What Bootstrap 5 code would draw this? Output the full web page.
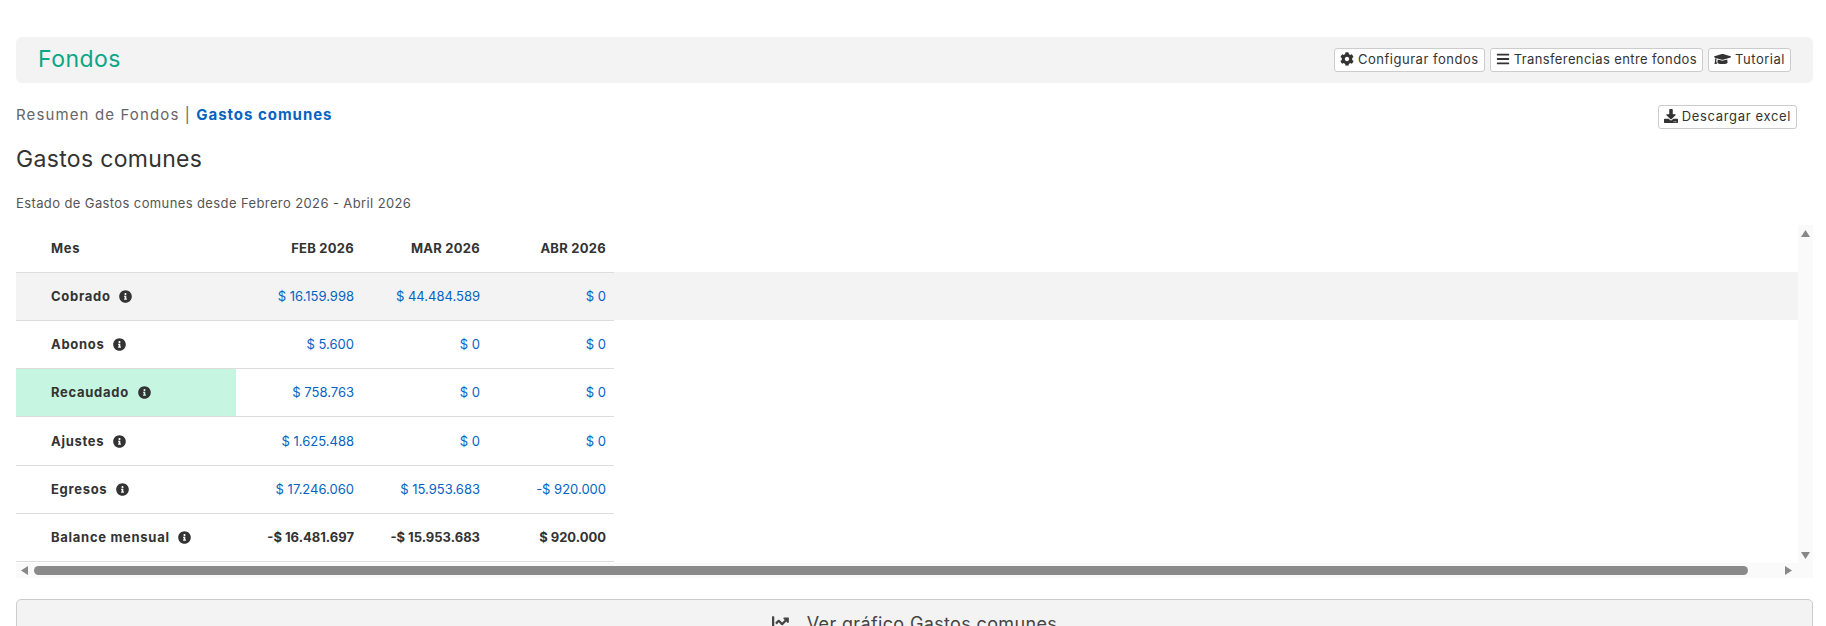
<!DOCTYPE html>
<html lang="es"><head><meta charset="utf-8"><title>Fondos</title>
<link href="https://cdn.jsdelivr.net/npm/bootstrap@5.3.0/dist/css/bootstrap.min.css" rel="stylesheet">
<style>
html,body{height:626px;overflow:hidden}
body{font-family:Inter,"Liberation Sans",sans-serif;color:#333;background:#fff;padding:37px 13px 0 16px}
.ic{fill:currentColor;width:1em;height:1em;vertical-align:-.125em}
.topbar{height:46px;background:#f3f3f3;border-radius:6px;padding:0 22px 0 22px}
.topbar-title{font-size:23px;color:#0aa686;font-weight:400;margin:0;letter-spacing:.02em}
.btn-plain{font-size:13px;line-height:18px;padding:1px 5px 3px;height:24px;background:#fff;border:1px solid #ccc;border-radius:3px;color:#333;white-space:nowrap;letter-spacing:.04em}
.btn-plain .ic{width:14px;height:14px;vertical-align:-2px}
.btn-plain .ic-wide{width:17px}
.btn-gap{gap:5px}
.btn-tight{letter-spacing:.03em}
.crumbs{margin-top:21px;height:25px;padding-right:16px}
.crumbs .btn-plain{margin-top:1px;letter-spacing:.05em}
.crumb-text{font-size:15px;color:#666;letter-spacing:.075em}
.crumb-text a{color:#0563c1;font-weight:700;text-decoration:none;letter-spacing:.065em}
.sec-title{font-size:23px;font-weight:400;line-height:30px;margin:15px 0 0;color:#333;letter-spacing:.014em}
.sec-sub{font-size:13px;color:#555;line-height:18px;margin:20px 0 0;letter-spacing:.03em}
.scrollbox{height:353px;margin-top:13px}
.scroll-main{height:338px}
.scroll-view{overflow:hidden}
.vbar{width:15px;background:#fafafa;padding:5px 0 4px}
.hbar{height:15px;background:#fafafa;padding-left:5px;padding-right:21px}
.hthumb{height:9px;width:1714px;margin-left:6px;background:#8a8a8a;border-radius:5px}
.arrow{fill:#888;display:block}
.grid-t{width:1823px;table-layout:fixed;border-collapse:collapse;font-size:13px}
.grid-t th,.grid-t td{height:48.3px;padding:1px 8px 0 0;text-align:right;border-bottom:1px solid #ddd;vertical-align:middle;color:#0563c1;font-weight:400}
.grid-t thead th{height:47px;padding-top:0;color:#333;font-weight:700;letter-spacing:.02em}
.grid-t .lbl{text-align:left;padding-left:35px;color:#333;font-weight:700;letter-spacing:.055em}
.grid-t .fill{border:0}
.grid-t .tot{color:#333;font-weight:700}
.grid-t .i-sm{font-size:13px;margin-left:5px;vertical-align:-2px}
.r-grey td,.r-grey th{background:#f3f3f3}
.grid-t .r-mint{background:#c6f6e1}
.chart-btn{width:100%;margin-top:21px;height:60px;background:#f3f3f3;border:1px solid #ccc;border-radius:5px;color:#444;font-size:18px;letter-spacing:.02em;display:block;padding:0 0 12px}
.chart-btn .ic{margin-right:6px}
</style></head><body>
<svg width="0" height="0" class="d-block position-absolute">
<symbol id="i-info" viewBox="0 0 512 512"><path d="M256 8C119.043 8 8 119.083 8 256c0 136.997 111.043 248 248 248s248-111.003 248-248C504 119.083 392.957 8 256 8zm0 110c23.196 0 42 18.804 42 42s-18.804 42-42 42-42-18.804-42-42 18.804-42 42-42zm56 254c0 6.627-5.373 12-12 12h-88c-6.627 0-12-5.373-12-12v-24c0-6.627 5.373-12 12-12h12v-64h-12c-6.627 0-12-5.373-12-12v-24c0-6.627 5.373-12 12-12h64c6.627 0 12 5.373 12 12v100h12c6.627 0 12 5.373 12 12v24z"/></symbol>
<symbol id="i-cog" viewBox="0 0 512 512"><path d="M487.4 315.7l-42.6-24.6c4.3-23.2 4.3-47 0-70.2l42.6-24.6c4.9-2.8 7.1-8.6 5.5-14-11.1-35.6-30-67.8-54.7-94.6-3.8-4.1-10-5.1-14.8-2.3L380.8 110c-17.9-15.4-38.5-27.3-60.8-35.1V25.8c0-5.6-3.9-10.5-9.4-11.7-36.7-8.2-74.3-7.8-109.2 0-5.5 1.2-9.4 6.1-9.4 11.7V75c-22.2 7.9-42.8 19.8-60.8 35.1L88.7 85.5c-4.9-2.8-11-1.9-14.8 2.3-24.7 26.7-43.6 58.9-54.7 94.6-1.7 5.4.6 11.2 5.5 14L67.3 221c-4.3 23.2-4.3 47 0 70.2l-42.6 24.6c-4.9 2.8-7.1 8.6-5.5 14 11.1 35.6 30 67.8 54.7 94.6 3.8 4.1 10 5.1 14.8 2.3l42.6-24.6c17.9 15.4 38.5 27.3 60.8 35.1v49.2c0 5.6 3.9 10.5 9.4 11.7 36.7 8.2 74.3 7.8 109.2 0 5.5-1.2 9.4-6.1 9.4-11.7v-49.2c22.2-7.9 42.8-19.8 60.8-35.1l42.6 24.6c4.9 2.8 11 1.9 14.8-2.3 24.7-26.7 43.6-58.9 54.7-94.6 1.5-5.5-.7-11.3-5.6-14.1zM256 336c-44.1 0-80-35.9-80-80s35.9-80 80-80 80 35.9 80 80-35.9 80-80 80z"/></symbol>
<symbol id="i-bars" viewBox="0 0 448 512"><path d="M16 132h416c8.837 0 16-7.163 16-16V76c0-8.837-7.163-16-16-16H16C7.163 60 0 67.163 0 76v40c0 8.837 7.163 16 16 16zm0 160h416c8.837 0 16-7.163 16-16v-40c0-8.837-7.163-16-16-16H16c-8.837 0-16 7.163-16 16v40c0 8.837 7.163 16 16 16zm0 160h416c8.837 0 16-7.163 16-16v-40c0-8.837-7.163-16-16-16H16c-8.837 0-16 7.163-16 16v40c0 8.837 7.163 16 16 16z"/></symbol>
<symbol id="i-cap" viewBox="0 0 640 512"><path d="M622.34 153.2L343.4 67.5c-15.2-4.67-31.6-4.67-46.79 0L17.66 153.2c-23.54 7.23-23.54 38.36 0 45.59l48.63 14.94c-10.67 13.19-17.23 29.28-17.88 46.9C38.78 266.15 32 276.11 32 288c0 10.78 5.68 19.85 13.86 25.65L20.33 428.53C18.11 438.52 25.71 448 35.94 448h56.11c10.24 0 17.84-9.48 15.62-19.47L82.14 313.65C90.32 307.85 96 298.78 96 288c0-11.57-6.47-21.25-15.66-26.87.76-15.02 8.44-28.3 20.69-36.72L296.6 284.5c9.06 2.78 26.44 6.25 46.79 0l278.95-85.7c23.55-7.24 23.55-38.36 0-45.6zM352.79 315.09c-28.53 8.76-52.84 3.92-65.59 0l-145.02-44.55L128 384c0 35.35 85.96 64 192 64s192-28.65 192-64l-14.18-113.47-145.03 44.56z"/></symbol>
<symbol id="i-down" viewBox="0 0 512 512"><path d="M216 0h80c13.3 0 24 10.7 24 24v168h87.7c17.8 0 26.7 21.5 14.1 34.1L269.7 378.3c-7.5 7.5-19.8 7.5-27.3 0L90.1 226.1c-12.6-12.6-3.7-34.1 14.1-34.1H192V24c0-13.3 10.7-24 24-24zm296 376v112c0 13.3-10.7 24-24 24H24c-13.3 0-24-10.7-24-24V376c0-13.3 10.7-24 24-24h146.7l49 49c20.1 20.1 52.5 20.1 72.6 0l49-49H488c13.3 0 24 10.7 24 24zm-124 88c0-11-9-20-20-20s-20 9-20 20 9 20 20 20 20-9 20-20zm64 0c0-11-9-20-20-20s-20 9-20 20 9 20 20 20 20-9 20-20z"/></symbol>
<symbol id="i-chart" viewBox="0 0 512 512"><path d="M496 384H64V80c0-8.84-7.16-16-16-16H16C7.16 64 0 71.16 0 80v336c0 17.67 14.33 32 32 32h464c8.84 0 16-7.16 16-16v-32c0-8.84-7.16-16-16-16zM464 96H345.94c-21.38 0-32.09 25.85-16.97 40.97l32.4 32.4L288 242.75l-73.37-73.37c-12.5-12.5-32.76-12.5-45.25 0l-68.69 68.69c-6.25 6.25-6.25 16.38 0 22.63l22.62 22.62c6.25 6.25 16.38 6.25 22.63 0L192 237.25l73.37 73.37c12.5 12.5 32.76 12.5 45.25 0l96-96 32.4 32.4c15.12 15.12 40.97 4.41 40.97-16.97V112c0-8.84-7.16-16-16-16z"/></symbol>
</svg>

<header class="topbar d-flex align-items-center justify-content-between">
  <h1 class="topbar-title">Fondos</h1>
  <div class="d-flex btn-gap">
    <button class="btn-plain"><svg class="ic"><use href="#i-cog"/></svg> Configurar fondos</button>
    <button class="btn-plain btn-tight"><svg class="ic"><use href="#i-bars"/></svg> Transferencias entre fondos</button>
    <button class="btn-plain"><svg class="ic ic-wide"><use href="#i-cap"/></svg> Tutorial</button>
  </div>
</header>

<div class="crumbs d-flex justify-content-between align-items-start">
  <div class="crumb-text">Resumen de Fondos | <a href="#">Gastos comunes</a></div>
  <button class="btn-plain"><svg class="ic"><use href="#i-down"/></svg> Descargar excel</button>
</div>
<h2 class="sec-title">Gastos comunes</h2>
<p class="sec-sub">Estado de Gastos comunes desde Febrero 2026 - Abril 2026</p>

<div class="scrollbox">
<div class="scroll-main d-flex">
<div class="scroll-view flex-grow-1">
<table class="grid-t">
<colgroup><col style="width:220px"><col style="width:126px"><col style="width:126px"><col style="width:126px"><col></colgroup>
<thead><tr><th class="lbl">Mes</th><th>FEB 2026</th><th>MAR 2026</th><th>ABR 2026</th><th class="fill"></th></tr></thead>
<tbody>
<tr class="r-grey"><th class="lbl">Cobrado <svg class="ic i-sm"><use href="#i-info"/></svg></th><td>$ 16.159.998</td><td>$ 44.484.589</td><td>$ 0</td><td class="fill"></td></tr>
<tr><th class="lbl">Abonos <svg class="ic i-sm"><use href="#i-info"/></svg></th><td>$ 5.600</td><td>$ 0</td><td>$ 0</td><td class="fill"></td></tr>
<tr><th class="lbl r-mint">Recaudado <svg class="ic i-sm"><use href="#i-info"/></svg></th><td>$ 758.763</td><td>$ 0</td><td>$ 0</td><td class="fill"></td></tr>
<tr><th class="lbl">Ajustes <svg class="ic i-sm"><use href="#i-info"/></svg></th><td>$ 1.625.488</td><td>$ 0</td><td>$ 0</td><td class="fill"></td></tr>
<tr><th class="lbl">Egresos <svg class="ic i-sm"><use href="#i-info"/></svg></th><td>$ 17.246.060</td><td>$ 15.953.683</td><td>-$ 920.000</td><td class="fill"></td></tr>
<tr><th class="lbl">Balance mensual <svg class="ic i-sm"><use href="#i-info"/></svg></th><td class="tot">-$ 16.481.697</td><td class="tot">-$ 15.953.683</td><td class="tot">$ 920.000</td><td class="fill"></td></tr>
</tbody></table>
</div>
<div class="vbar d-flex flex-column justify-content-between align-items-center flex-shrink-0">
  <svg class="arrow" width="9" height="7"><path d="M4.5 0L9 7H0z"/></svg>
  <svg class="arrow" width="9" height="7"><path d="M4.5 7L9 0H0z"/></svg>
</div>
</div>
<div class="hbar d-flex align-items-center">
  <svg class="arrow flex-shrink-0" width="7" height="9"><path d="M0 4.5L7 9V0z"/></svg>
  <div class="hthumb flex-shrink-0"></div>
  <svg class="arrow flex-shrink-0 ms-auto" width="7" height="9"><path d="M7 4.5L0 9V0z"/></svg>
</div>
</div>

<button class="chart-btn"><svg class="ic"><use href="#i-chart"/></svg> &nbsp;Ver gráfico Gastos comunes</button>
</body></html>
